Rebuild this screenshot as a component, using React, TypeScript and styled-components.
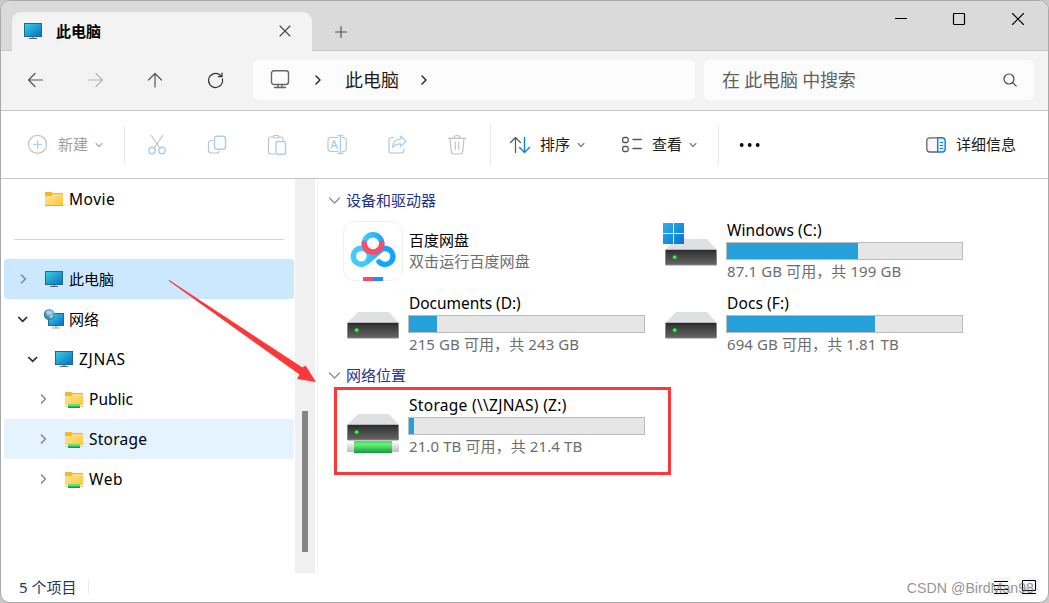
import React from 'react';
import styled, { createGlobalStyle } from 'styled-components';

const colors = {
  frame: '#a9a9a9',
  titleBar: '#dadada',
  nav: '#f3f3f3',
  field: '#fcfcfc',
  line: '#c6c6c6',
  muted: '#6d6d6d',
  disabled: '#a0a0a0',
  disabledLine: '#c2c2c2',
  disabledBlue: '#a3d0f2',
  blue: '#0f7fd8',
  heading: '#1e3287',
  bar: '#26a0da',
  mark: '#fd3838',
};

const GlobalStyle = createGlobalStyle`
  body {
    margin: 0;
    background: #c9c9c9;
    font-family: 'Noto Sans', 'Noto Sans CJK SC', sans-serif;
    font-size: 15px;
    color: #000;
    overflow: hidden;
  }

  svg {
    display: block;
    flex: none;
    overflow: visible;
  }
`;

const Window = styled.div`
  position: relative;
  box-sizing: border-box;
  width: 1049px;
  height: 603px;
  display: flex;
  flex-direction: column;
  background: #fff;
  border: 1px solid ${colors.frame};
  border-radius: 10px;
  overflow: hidden;
`;

const TitleBar = styled.div`
  display: flex;
  height: 50px;
  flex: none;
  box-sizing: border-box;
  padding-left: 11px;
  background: ${colors.titleBar};
  box-shadow: inset 0 -1px 0 ${colors.line};
`;

const Tab = styled.div`
  display: flex;
  align-items: center;
  width: 300px;
  height: 39px;
  margin-top: 11px;
  box-sizing: border-box;
  padding: 0 21px 2px 11px;
  background: ${colors.nav};
  border-radius: 9px 9px 0 0;
`;

const TabTitle = styled.span`
  flex: 1;
  margin-left: 13px;
  font-weight: 700;
  line-height: 20px;
`;

const NewTab = styled.div`
  margin: 21px auto 0 19px;
`;

const Caption = styled.div`
  display: flex;
  gap: 38px;
  margin: 8px 19px 0 0;
`;

const NavBar = styled.div`
  display: flex;
  height: 59px;
  flex: none;
  box-sizing: border-box;
  padding: 9px 14px 0 25px;
  background: ${colors.nav};
`;

const NavButton = styled.div`
  display: flex;
  align-items: center;
  width: 60px;
  height: 40px;
`;

const Field = styled.div<{ $width: number }>`
  display: flex;
  align-items: center;
  box-sizing: border-box;
  width: ${(props) => props.$width}px;
  height: 40px;
  background: ${colors.field};
  border-radius: 5px;
  font-size: 18px;
  line-height: 24px;
`;

const AddressField = styled(Field)`
  margin-left: -13px;
  padding-left: 17px;
`;

const Crumb = styled.div`
  margin: 0 21px 0 23px;
  color: #1a1a1a;
`;

const CrumbArrow = styled.div<{ $left?: number }>`
  margin-left: ${(props) => props.$left || 0}px;
`;

const SearchField = styled(Field)`
  margin-left: 9px;
  padding: 0 14px 0 18px;
  justify-content: space-between;
  color: #5f5f5f;
  letter-spacing: -0.2px;
`;

const Toolbar = styled.div`
  display: flex;
  align-items: center;
  height: 69px;
  flex: none;
  box-sizing: border-box;
  padding: 0 32px 0 27px;
  border-top: 1px solid ${colors.line};
  border-bottom: 1px solid ${colors.line};
`;

const Command = styled.div<{ $disabled?: boolean; $left?: number }>`
  display: flex;
  align-items: center;
  margin-left: ${(props) => props.$left || 0}px;
  color: ${(props) => (props.$disabled ? colors.disabled : '#1b1b1b')};
  line-height: 21px;
`;

const CommandLabel = styled.span`
  margin: 0 6px 0 10px;
`;

const IconGroup = styled.div`
  display: flex;
  gap: 40px;
`;

const Divider = styled.div<{ $left: number; $right: number }>`
  width: 1px;
  height: 40px;
  margin: 0 ${(props) => props.$right}px 0 ${(props) => props.$left}px;
  background: #e8e8e8;
`;

const Details = styled(Command)`
  margin-left: auto;
  gap: 10px;
`;

const Body = styled.div`
  display: flex;
  height: 394px;
  flex: none;
`;

const Sidebar = styled.div`
  width: 290px;
  padding: 0 1px 0 3px;
`;

const TreeRow = styled.div<{ $level: number; $background?: string }>`
  display: flex;
  align-items: center;
  height: 40px;
  box-sizing: border-box;
  padding-left: ${(props) => 13 + props.$level * 10}px;
  background: ${(props) => props.$background || 'transparent'};
  border-radius: 3px;
  line-height: 20px;
`;

const TreeToggle = styled.div`
  width: 12px;
  height: 20px;
  margin-right: 15px;
`;

const TreeLabel = styled.span<{ $tracking?: number }>`
  margin-left: 5px;
  font-size: ${(props) => (props.$tracking === undefined ? 15 : 15.5)}px;
  letter-spacing: ${(props) => props.$tracking || 0}px;
`;

const TreeSeparator = styled.div`
  height: 1px;
  margin: 20px 10px 19px;
  background: #d4d4d4;
`;

const ScrollTrack = styled.div`
  box-sizing: border-box;
  width: 20px;
  padding: 232px 7px 0;
  background: #f0f0f0;
`;

const ScrollThumb = styled.div`
  width: 6px;
  height: 141px;
  background: #858585;
`;

const Main = styled.div`
  flex: 1;
  margin-left: 2px;
  padding: 7px 0 0 10px;
  border-left: 1px solid #f2f2f2;
`;

const SectionTitle = styled.div<{ $height: number }>`
  display: flex;
  align-items: center;
  gap: 5px;
  height: ${(props) => props.$height}px;
  color: ${colors.heading};
  line-height: 20px;
`;

const Tiles = styled.div`
  display: grid;
  grid-template-columns: 318px 318px;
  grid-auto-rows: 73px;
  padding-left: 15px;
`;

const Tile = styled.div`
  display: flex;
  gap: 5px;
  padding-top: 7px;
`;

const TileText = styled.div<{ $top?: number }>`
  width: 237px;
  margin-top: ${(props) => props.$top || -1}px;
`;

const TileName = styled.div<{ $tracking?: number }>`
  padding-left: 1px;
  font-size: ${(props) => (props.$tracking === undefined ? 15 : 15.5)}px;
  letter-spacing: ${(props) => props.$tracking || 0}px;
  line-height: 20px;
  white-space: nowrap;
`;

const TileNote = styled.div<{ $top: number }>`
  margin-top: ${(props) => props.$top}px;
  padding-left: 1px;
  letter-spacing: 0.1px;
  line-height: 20px;
  white-space: nowrap;
  color: ${colors.muted};
`;

const Meter = styled.div`
  box-sizing: border-box;
  height: 18px;
  margin-top: 2px;
  background: #e6e6e6;
  border: 1px solid #bcbcbc;
`;

const MeterFill = styled.div`
  height: 100%;
  background: ${colors.bar};
`;

const StatusBar = styled.div`
  display: flex;
  align-items: center;
  flex: 1;
  padding: 0 9px 2px 18px;
  color: #1e395b;
  line-height: 20px;
`;

const StatusDivider = styled.div`
  width: 1px;
  height: 14px;
  margin: 0 auto 0 12px;
  background: #ececec;
`;

const ViewButton = styled.div`
  margin-left: 8px;
  background: #f5f5f5;
`;

const Watermark = styled.span`
  position: absolute;
  right: 14px;
  bottom: 5px;
  font-family: 'Liberation Sans', sans-serif;
  font-size: 14.2px;
  line-height: 17px;
  color: rgba(120, 120, 120, 0.8);
`;

const MarkBox = styled.div`
  position: absolute;
  left: 333px;
  top: 386px;
  width: 331px;
  height: 82px;
  border: 3px solid ${colors.mark};
`;

const MarkArrow = styled.svg`
  position: absolute;
  left: 166px;
  top: 277px;
`;

interface StrokeProps {
  d: string;
  color?: string;
  width?: number;
}

const Stroke = ({ d, color = '#555', width = 1.2 }: StrokeProps) => (
  <path d={d} fill="none" stroke={color} strokeWidth={width} strokeLinecap="round" strokeLinejoin="round" />
);

const Icon = ({ children, w = 20, h = 20 }: { children: React.ReactNode; w?: number; h?: number }) => (
  <svg width={w} height={h} viewBox={`0 0 ${w} ${h}`}>
    {children}
  </svg>
);

const MonitorIcon = () => (
  <Icon>
    <defs>
      <linearGradient id="screen" x1="0" y1="0" x2="1" y2="1">
        <stop offset="0" stopColor="#35d6e2" />
        <stop offset="1" stopColor="#0b6ac4" />
      </linearGradient>
    </defs>
    <rect x="1.5" y="2.5" width="17" height="13" fill="url(#screen)" stroke="#1d6a91" />
    <path d="M8.5 16h3v1h-3z" fill="#9aa3aa" />
    <path d="M6 17h8v1H6z" fill="#59636d" />
  </Icon>
);

const NetworkIcon = () => (
  <Icon>
    <defs>
      <radialGradient id="globe" cx="0.6" cy="0.35" r="0.75">
        <stop offset="0" stopColor="#b9dcec" />
        <stop offset="0.45" stopColor="#5ba4cb" />
        <stop offset="1" stopColor="#27668f" />
      </radialGradient>
    </defs>
    <rect x="4.5" y="4.5" width="15" height="12" fill="url(#screen)" stroke="#1d6a91" />
    <path d="M10.500 17h3v1.500h-3z" fill="#b5bcc2" />
    <path d="M8 18.500h8v1H8z" fill="#9aa3aa" />
    <circle cx="5.3" cy="5.5" r="5.5" fill="url(#globe)" />
    <path d="M2 3l2.5-1.5 1 2.5-2 2zM6 7l2-1 1 1.5L6.5 10z" fill="#e3f1f5" opacity="0.6" />
  </Icon>
);

const FolderIcon = ({ shared }: { shared?: boolean }) => (
  <Icon>
    <defs>
      <linearGradient id="folder" x1="0" y1="0" x2="1" y2="1">
        <stop offset="0" stopColor="#ffe59b" />
        <stop offset="1" stopColor="#fdc63b" />
      </linearGradient>
    </defs>
    <path d="M1 3.500Q1 3 1.500 3h5.700l1.300 1H19v4H1z" fill="#f9b61d" />
    <path d="M1 7h6l2-2h10v11.500H1z" fill="url(#folder)" />
    {!shared && <path d="M1 16h18v1H1z" fill="#e8a63a" />}
    {shared && (
      <>
        <path d="M1 16h18v2H1z" fill="#fff" />
        <path d="M1 17h18v1H1z" fill="#c9c9c9" />
        <path d="M4 15h12v2.500H4z" fill="#58e66c" />
        <path d="M4 17.300h12v1.700H4z" fill="#1c9a45" />
      </>
    )}
  </Icon>
);

const TreeChevron = ({ open }: { open?: boolean }) => (
  <Icon w={12}>
    {open ? (
      <path d="M1.3 8l4.4 4.3L10.1 8" fill="none" stroke="#2b2b2b" strokeWidth="1.7" />
    ) : (
      <path d="M4 5.600L8.400 10L4 14.400" fill="none" stroke="#8b8b8b" strokeWidth="1.5" />
    )}
  </Icon>
);

const SmallChevron = ({ color }: { color: string }) => (
  <Icon w={10} h={21}>
    <Stroke d="M2 9.500L5 12.500L8 9.500" color={color} width={1.1} />
  </Icon>
);

const PathChevron = () => (
  <Icon w={8}>
    <Stroke d="M2 6L6 10L2 14" color="#222" width={1.4} />
  </Icon>
);

const DriveIcon = ({ system, network }: { system?: boolean; network?: boolean }) => (
  <Icon w={60} h={60}>
    <defs>
      <linearGradient id="case" x1="0" y1="0" x2="0" y2="1">
        <stop offset="0" stopColor="#2f2f2f" />
        <stop offset="1" stopColor="#656565" />
      </linearGradient>
      <linearGradient id="logo" x1="0" y1="0" x2="1" y2="1">
        <stop offset="0" stopColor="#2ab0ee" />
        <stop offset="1" stopColor="#0874cf" />
      </linearGradient>
      <linearGradient id="cable" x1="0" y1="0" x2="0" y2="1">
        <stop offset="0" stopColor="#3be25a" />
        <stop offset="0.3" stopColor="#68f078" />
        <stop offset="1" stopColor="#129a3c" />
      </linearGradient>
      <linearGradient id="pipe" x1="0" y1="0" x2="0" y2="1">
        <stop offset="0" stopColor="#fafafa" />
        <stop offset="1" stopColor="#bdbdbd" />
      </linearGradient>
    </defs>
    {network && (
      <>
        <rect x="4" y="46" width="52" height="10" fill="url(#pipe)" />
        <rect x="11" y="45" width="38" height="12" fill="url(#cable)" />
      </>
    )}
    <path d="M15 18h31l10 11H4z" fill="#dfe0e4" />
    <rect x="4.500" y="29" width="51" height="15" rx="0.5" fill="url(#case)" stroke="#8a8a8a" />
    <path d="M5 29h50v1.2H5z" fill="#2b2b2b" />
    <circle cx="13.800" cy="36.300" r="2.300" fill="#16c421" />
    <circle cx="13.500" cy="36" r="1" fill="#8dff90" />
    {system && <path d="M2 2h10v10H2zM13 2h10v10H13zM2 13h10v10H2zM13 13h10v10H13z" fill="url(#logo)" />}
  </Icon>
);

const NetdiskIcon = () => (
  <Icon w={60} h={60}>
    <defs>
      <linearGradient id="cloud" gradientUnits="userSpaceOnUse" x1="18" y1="0" x2="42" y2="0">
        <stop offset="0" stopColor="#47d0fb" />
        <stop offset="1" stopColor="#14a3ff" />
      </linearGradient>
    </defs>
    <rect x="0.500" y="0.500" width="59" height="59" rx="11" fill="#fff" stroke="#efefef" />
    <circle cx="30" cy="22.600" r="8.800" fill="none" stroke="url(#cloud)" strokeWidth="5.400" />
    <circle cx="18.300" cy="35.300" r="8" fill="none" stroke="#40cbfb" strokeWidth="5.400" />
    <path d="M23.500 41.300L38 28.800" stroke="url(#cloud)" strokeWidth="5.400" />
    <path
      d="M36.500 29.600A8 8 0 1 1 36 40.800"
      fill="none"
      stroke="#12a5ff"
      strokeWidth="5.400"
      strokeLinecap="round"
    />
    <path
      d="M21.200 22.300A8.800 8.800 0 0 0 38.800 22.300"
      fill="none"
      stroke="#fd4a6b"
      strokeWidth="5.400"
      strokeLinecap="round"
    />
    <path d="M20 56h10v4H20z" fill="#f9496c" />
    <path d="M30 56h10v4H30z" fill="#1f8bff" />
  </Icon>
);

interface TreeItem {
  label: string;
  level: number;
  icon: React.ReactNode;
  open?: boolean;
  background?: string;
  tracking?: number;
}

const treeItems: TreeItem[] = [
  { label: '此电脑', level: 0, icon: <MonitorIcon />, background: '#cce8ff' },
  { label: '网络', level: 0, icon: <NetworkIcon />, open: true },
  { label: 'ZJNAS', level: 1, icon: <MonitorIcon />, open: true, tracking: 0.7 },
  { label: 'Public', level: 2, icon: <FolderIcon shared />, tracking: 0 },
  { label: 'Storage', level: 2, icon: <FolderIcon shared />, background: '#e5f3ff', tracking: 0.25 },
  { label: 'Web', level: 2, icon: <FolderIcon shared />, tracking: 0.6 },
];

interface DriveProps {
  name: string;
  note: string;
  used: number;
  tracking: number;
  system?: boolean;
  network?: boolean;
}

const Drive = ({ name, note, used, tracking, system, network }: DriveProps) => (
  <Tile>
    <DriveIcon system={system} network={network} />
    <TileText>
      <TileName $tracking={tracking}>{name}</TileName>
      <Meter>
        <MeterFill style={{ width: `${used}%` }} />
      </Meter>
      <TileNote $top={1}>{note}</TileNote>
    </TileText>
  </Tile>
);

const Section = ({ title, height, children }: { title: string; height: number; children: React.ReactNode }) => (
  <>
    <SectionTitle $height={height}>
      <Icon w={13}>
        <Stroke d="M1.500 8L6.500 13L11.500 8" color="#8a8a8a" />
      </Icon>
      {title}
    </SectionTitle>
    <Tiles>{children}</Tiles>
  </>
);

const { disabledLine, disabledBlue } = colors;

export default function App() {
  return (
    <>
      <GlobalStyle />
      <Window>
        <TitleBar>
          <Tab>
            <MonitorIcon />
            <TabTitle>此电脑</TabTitle>
            <Icon w={12} h={20}>
              <Stroke d="M1 5L11 15M11 5L1 15" color="#444" width={1.1} />
            </Icon>
          </Tab>
          <NewTab>
            <Icon>
              <Stroke d="M10 4.500V15.500M4.500 10H15.500" color="#555" />
            </Icon>
          </NewTab>
          <Caption>
            <Icon>
              <path d="M2 9h12v1H2z" />
            </Icon>
            <Icon>
              <rect x="2.500" y="4.500" width="11" height="11" rx="0.800" fill="none" stroke="#000" strokeWidth="1.200" />
            </Icon>
            <Icon>
              <Stroke d="M3.500 4.500L14.500 15.500M14.500 4.500L3.500 15.500" color="#000" width={1.1} />
            </Icon>
          </Caption>
        </TitleBar>

        <NavBar>
          <NavButton>
            <Icon>
              <Stroke d="M16.500 10H2.500M9 3.500L2.500 10L9 16.500" />
            </Icon>
          </NavButton>
          <NavButton>
            <Icon>
              <Stroke d="M2.500 10H16.500M10 3.500L16.500 10L10 16.500" color="#b4b4b4" />
            </Icon>
          </NavButton>
          <NavButton>
            <Icon>
              <Stroke d="M9 17V3.500M2.500 10L9 3.500L15.500 10" />
            </Icon>
          </NavButton>
          <NavButton>
            <Icon>
              <Stroke d="M16.500 8.800A7.100 7.100 0 1 1 13.300 4.400L16 6.300M16 3V6.700H12.300" color="#333" />
            </Icon>
          </NavButton>
          <AddressField $width={442}>
            <Icon>
              <rect x="1.500" y="0.700" width="17" height="13.800" rx="2.500" fill="none" stroke="#666" strokeWidth="1.400" />
              <Stroke d="M4.500 17.500H15.500M8 14.500V17.500M12 14.500V17.500" color="#666" width={1.4} />
            </Icon>
            <CrumbArrow $left={24}>
              <PathChevron />
            </CrumbArrow>
            <Crumb>此电脑</Crumb>
            <CrumbArrow>
              <PathChevron />
            </CrumbArrow>
          </AddressField>
          <SearchField $width={330}>
            在 此电脑 中搜索
            <Icon>
              <circle cx="9" cy="9" r="5" fill="none" stroke="#444" strokeWidth="1.200" />
              <Stroke d="M12.700 12.700L16.200 16.200" color="#444" />
            </Icon>
          </SearchField>
        </NavBar>

        <Toolbar>
          <Command $disabled>
            <Icon h={21}>
              <circle cx="9.500" cy="10.400" r="9" fill="none" stroke={disabledLine} strokeWidth="1.200" />
              <Stroke d="M9.500 6.500V14.300M5.600 10.400H13.400" color={disabledBlue} />
            </Icon>
            <CommandLabel>新建</CommandLabel>
            <SmallChevron color="#aaa" />
          </Command>
          <Divider $left={20} $right={22} />
          <IconGroup>
            <Icon h={21}>
              <Stroke d="M4.300 1.500L13 14.500M15.700 1.500L7 14.500" color={disabledLine} />
              <circle cx="5" cy="16.500" r="3.200" fill="none" stroke={disabledBlue} strokeWidth="1.400" />
              <circle cx="15" cy="16.500" r="3.200" fill="none" stroke={disabledBlue} strokeWidth="1.400" />
            </Icon>
            <Icon h={21}>
              <Stroke
                d="M6 6.500H4.500Q1.500 6.500 1.500 9.500V16Q1.500 19 4.500 19H9.500Q12.200 19 12.200 17"
                color={disabledLine}
              />
              <rect x="7.500" y="2.300" width="11" height="13" rx="2.500" fill="none" stroke={disabledBlue} strokeWidth="1.400" />
            </Icon>
            <Icon h={21}>
              <Stroke
                d="M6.500 3H3Q1.500 3 1.500 5V18Q1.500 20 3 20H7.500M12 3H14.500Q16 3 16 5V6M6.500 2.200Q6.500 1.500 7.500 1.500H11Q12 1.500 12 2.500T11 4H7.500Q6.500 4 6.500 2.200"
                color={disabledLine}
              />
              <rect x="9" y="7.500" width="9.500" height="12.700" rx="1.300" fill="none" stroke={disabledBlue} strokeWidth="1.400" />
            </Icon>
            <Icon h={21}>
              <Stroke
                d="M11 3.500H4Q1 3.500 1 6.500V14.500Q1 17.500 4 17.500H11M15.500 3.500H16Q19.300 3.500 19.300 6.500V14.500Q19.300 17.500 16 17.500H15.500"
                color={disabledLine}
              />
              <Stroke
                d="M4 14.500L7.200 6.500L10.400 14.500M5.200 12H9.200M13.500 1.500V19.500M11 1.500H16M11 19.500H16"
                color={disabledBlue}
                width={1.3}
              />
            </Icon>
            <Icon h={21}>
              <Stroke
                d="M6.500 3.500H4.500Q2 3.500 2 6V16.500Q2 19 4.500 19H14Q16.800 19 16.800 16.500V15"
                color={disabledLine}
              />
              <Stroke d="M13.500 2L19 7.300L13.500 12.500V9.800Q8 9.800 5.500 13.500Q6 5.500 13.500 5Z" color={disabledBlue} />
            </Icon>
            <Icon h={21}>
              <Stroke
                d="M1.300 4.300H18.700M6.800 4Q7 1.500 10 1.500T13.200 4M3 4.500L4.300 17.500Q4.500 20 6.500 20H13.500Q15.500 20 15.700 17.500L17 4.500M8.300 8V15.500M11.700 8V15.500"
                color={disabledLine}
              />
            </Icon>
          </IconGroup>
          <Divider $left={23} $right={19} />
          <Command>
            <Icon h={21}>
              <Stroke d="M5.500 18.500V3.500M0.500 8.500L5.500 3.500L10.500 8.500" />
              <Stroke d="M14.500 3.500V18.500M9.500 13.500L14.500 18.500L19.500 13.500" color={colors.blue} width={1.4} />
            </Icon>
            <CommandLabel>排序</CommandLabel>
            <SmallChevron color="#777" />
          </Command>
          <Command $left={36}>
            <Icon h={21}>
              <rect x="0.700" y="3.500" width="5.500" height="5" rx="1.500" fill="none" stroke="#555" strokeWidth="1.300" />
              <rect x="0.700" y="12.500" width="5.500" height="5" rx="1.500" fill="none" stroke="#555" strokeWidth="1.300" />
              <Stroke d="M11 5.500H19.300M11 14.500H19.300" width={1.3} />
            </Icon>
            <CommandLabel>查看</CommandLabel>
            <SmallChevron color="#777" />
          </Command>
          <Divider $left={20} $right={20} />
          <Icon h={21}>
            <circle cx="2.700" cy="11" r="1.900" />
            <circle cx="10.700" cy="11" r="1.900" />
            <circle cx="18.700" cy="11" r="1.900" />
          </Icon>
          <Details>
            <Icon h={21}>
              <path
                d="M11.500 3.800H4Q0.800 3.800 0.800 7V15Q0.800 18 4 18H11.500"
                fill="#f7f7f7"
                stroke="#666"
                strokeWidth="1.300"
              />
              <path
                d="M11.700 3.800H16Q19.200 3.800 19.200 7V15Q19.200 18 16 18H11.700Z"
                fill="#e9f4fd"
                stroke={colors.blue}
                strokeWidth="1.400"
              />
              <Stroke d="M14.300 8.500H16.700M14.300 11.500H16.700M14.300 14.500H16.700" color={colors.blue} />
            </Icon>
            详细信息
          </Details>
        </Toolbar>

        <Body>
          <Sidebar>
            <TreeRow $level={0}>
              <TreeToggle />
              <FolderIcon />
              <TreeLabel $tracking={0.5}>Movie</TreeLabel>
            </TreeRow>
            <TreeSeparator />
            {treeItems.map((item) => (
              <TreeRow key={item.label} $level={item.level} $background={item.background}>
                <TreeToggle>
                  <TreeChevron open={item.open} />
                </TreeToggle>
                {item.icon}
                <TreeLabel $tracking={item.tracking}>{item.label}</TreeLabel>
              </TreeRow>
            ))}
          </Sidebar>
          <ScrollTrack>
            <ScrollThumb />
          </ScrollTrack>
          <Main>
            <Section title="设备和驱动器" height={28}>
              <Tile>
                <NetdiskIcon />
                <TileText $top={9}>
                  <TileName>百度网盘</TileName>
                  <TileNote $top={1}>双击运行百度网盘</TileNote>
                </TileText>
              </Tile>
              <Drive name="Windows (C:)" note="87.1 GB 可用，共 199 GB" used={55.7} tracking={0.1} system />
              <Drive name="Documents (D:)" note="215 GB 可用，共 243 GB" used={12} tracking={-0.05} />
              <Drive name="Docs (F:)" note="694 GB 可用，共 1.81 TB" used={63} tracking={0.1} />
            </Section>
            <Section title="网络位置" height={29}>
              <Drive
                name="Storage (\\ZJNAS) (Z:)"
                note="21.0 TB 可用，共 21.4 TB"
                used={2}
                tracking={0.3}
                network
              />
            </Section>
          </Main>
        </Body>

        <StatusBar>
          5 个项目
          <StatusDivider />
          <ViewButton>
            <Icon h={19}>
              <path d="M3 4h14v1H3zM3 8h14v1H3zM3 12h14v1H3zM3 16h14v1H3z" />
            </Icon>
          </ViewButton>
          <ViewButton>
            <Icon h={19}>
              <path d="M3.500 3.500h13v10h-13z" fill="none" stroke="#000" />
              <path d="M3 16h14v1H3z" />
            </Icon>
          </ViewButton>
        </StatusBar>

        <MarkBox />
        <MarkArrow width="150" height="106" viewBox="0 0 150 106">
          <path d="M1.500 2.800L2.200 2L135.500 89.500L138.500 87.500L149 104L130 101L132.500 96.500Z" fill={colors.mark} />
        </MarkArrow>
        <Watermark>CSDN @BirdMan98</Watermark>
      </Window>
    </>
  );
}
